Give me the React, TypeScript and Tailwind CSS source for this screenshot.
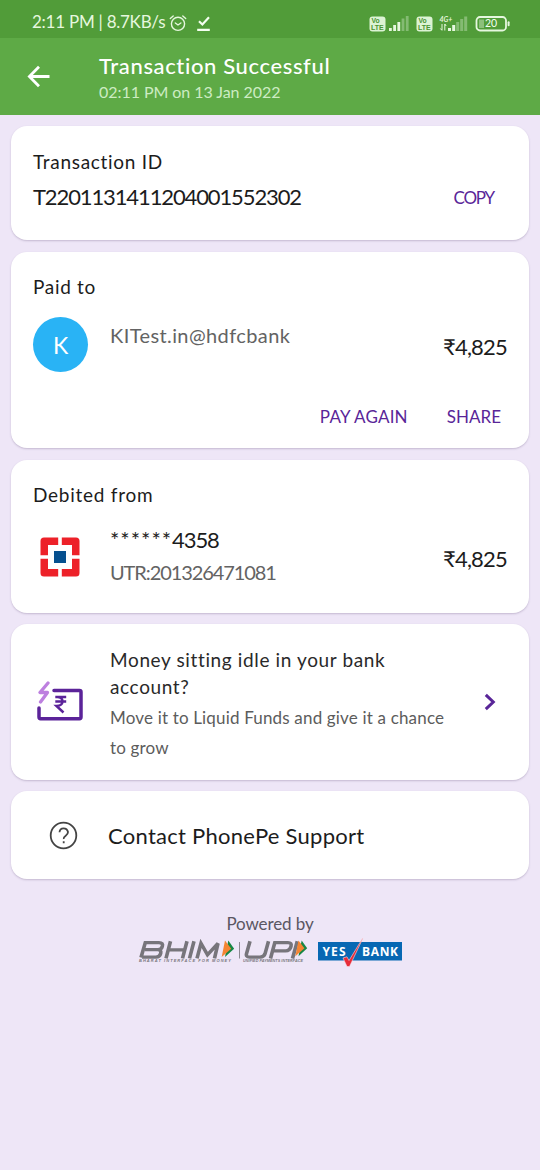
import React from 'react';

const VolteBadge: React.FC = () => (
  <svg width="17" height="16" viewBox="0 0 17 16">
    <rect x="0.5" y="0.5" width="16" height="15" rx="3" fill="#dcf3d4" />
    <text x="2.5" y="7.3" fontSize="6.8" fontWeight="700" fill="#4a9432" fontFamily="Liberation Sans, sans-serif">Vo</text>
    <text x="2" y="14" fontSize="7" fontWeight="700" fill="#4a9432" fontFamily="Liberation Sans, sans-serif">LTE</text>
  </svg>
);

const SignalBars: React.FC<{ active: number }> = ({ active }) => (
  <svg width="21" height="16" viewBox="0 0 21 16">
    {[3, 6, 9, 12.5, 15].map((h, i) => (
      <rect key={h} x={i * 4.2} y={15 - h} width="2.8" height={h} fill="#e6f7df" opacity={i < active ? 1 : 0.35} />
    ))}
  </svg>
);

const StatusBar: React.FC = () => (
  <div className="flex h-[38px] items-center justify-between bg-[#519c39] pl-8 pr-[30px] text-[#e6f7df]">
    <div className="flex h-full items-center">
      <span className="mt-[5px] w-[137px] text-[17px] leading-5 tracking-[-0.25px]">2:11 PM | 8.7KB/s</span>
      <svg className="mt-2" width="18" height="18" viewBox="0 0 18 18" fill="none" stroke="currentColor" strokeWidth="1.4" strokeLinecap="round">
        <circle cx="9" cy="9.8" r="6.6" />
        <path d="M1.3 4.6 4.2 2M16.7 4.6 13.8 2M6.3 9l2.7 2 2.9-2" />
      </svg>
      <svg className="ml-2 mt-[7px]" width="17" height="18" viewBox="0 0 17 18" fill="none" stroke="#f4fff0" strokeWidth="2.2">
        <path d="M4 7.2l3.4 3.3L14 3.3M2.2 15.8h12.6" />
      </svg>
    </div>
    <div className="mt-[10px] flex items-center">
      <VolteBadge />
      <span className="ml-[3px]"><SignalBars active={3} /></span>
      <span className="ml-[6px]"><VolteBadge /></span>
      <svg className="ml-[6px]" width="29" height="18" viewBox="0 0 29 18">
        <text x="0.5" y="6.5" fontSize="7" fontWeight="700" fontStyle="italic" fill="#e6f7df" fontFamily="Lato, sans-serif">4G+</text>
        <path d="M3 9v6M1.4 13.5 3 15.5M5.8 15.5V9M5.8 9l1.4 2" stroke="#e6f7df" strokeWidth="1" fill="none" />
        <rect x="9" y="13" width="3" height="3" fill="#e6f7df" />
        <rect x="13.2" y="10" width="3" height="6" fill="#e6f7df" />
        <g fill="#e6f7df" opacity="0.35">
          <rect x="17.2" y="7" width="3" height="9" />
          <rect x="21.2" y="4" width="3" height="12" />
          <rect x="25.2" y="1.5" width="3" height="14.5" />
        </g>
      </svg>
      <svg className="ml-[7px]" width="35" height="16" viewBox="0 0 35 16">
        <rect x="1.5" y="1" width="29.5" height="13.5" rx="3.5" fill="none" stroke="#e6f7df" strokeWidth="1.8" />
        <rect x="4" y="3.5" width="5" height="8.5" fill="#e6f7df" opacity="0.4" />
        <rect x="32.6" y="5.3" width="2" height="5" rx="1" fill="#e6f7df" />
        <text x="10" y="11" fontSize="10.5" fill="#f4fff0" fontFamily="Lato, sans-serif">20</text>
      </svg>
    </div>
  </div>
);

const Header: React.FC = () => (
  <header className="flex h-[77px] bg-[#5eaa46] text-white">
    <svg className="ml-[27px] mt-[27px]" width="24" height="23" viewBox="0 0 24 23" fill="none" stroke="white" strokeWidth="2.8">
      <path d="M22.5 11.5H3M12 1.8 2.4 11.5 12 21.2" />
    </svg>
    <div className="ml-12 mt-[14px] flex flex-col whitespace-nowrap">
      <h1 className="text-[22px] font-medium leading-7 tracking-[0.63px]">Transaction Successful</h1>
      <p className="mt-px text-base leading-[22px] tracking-[-0.05px] text-[#cdecc3]">02:11 PM on 13 Jan 2022</p>
    </div>
  </header>
);

const HdfcLogo: React.FC = () => (
  <svg width="40" height="40" viewBox="0 0 40 40">
    <path d="M4 0.5H36A3.5 3.5 0 0 1 39.5 4V36A3.5 3.5 0 0 1 36 39.5H4A3.5 3.5 0 0 1 .5 36V4A3.5 3.5 0 0 1 4 .5ZM8 8V32H32V8Z" fill="#ed2129" fillRule="evenodd" />
    <path d="M20 0V40M0 20H40" stroke="white" strokeWidth="3.6" />
    <rect x="14" y="14" width="12" height="12" fill="#06508f" />
  </svg>
);

const MoneyIcon: React.FC = () => (
  <svg width="48" height="42" viewBox="0 0 48 42" fill="none">
    <path d="M18 9.5H43.5Q45 9.5 45 11V36Q45 37.7 43.5 37.7H4.5Q3 37.7 3 36V27" stroke="#5b2399" strokeWidth="3.5" strokeLinecap="round" />
    <path d="M12 2 4 11.5H11.5L4.5 21" stroke="#bd80df" strokeWidth="3.3" strokeLinecap="round" strokeLinejoin="round" />
    <path d="M19.3 16H30.2M19.3 20.5H30.2M20.5 16C28.5 15.3 28.5 25 20.5 25L27.5 31.5" stroke="#5b2399" strokeWidth="2.5" />
  </svg>
);

const UpiArrow: React.FC = () => (
  <>
    <path d="M4 0 11 10 0 20Z" fill="#178745" />
    <path d="M0 0 7.5 10-4 20Z" fill="#f58532" />
  </>
);

const PoweredBy: React.FC = () => (
  <footer className="mt-[34px] flex flex-col items-center">
    <p className="text-[17px] leading-[22px] tracking-[-0.1px] text-[#5a5662]">Powered by</p>
    <svg className="mt-[3px]" width="264" height="30" viewBox="0 0 264 30">
      <g fill="none" stroke="#77757b" strokeWidth="3.6" transform="translate(0 1.4) scale(1 .93)">
        <path d="M3 19.5 7.3 3.5H21Q25.5 3.5 24.3 7.5Q23.5 11 20 11H7M20 11Q23.5 11.5 22.7 15Q21.8 19 18 19H4" />
        <path d="M28 20.5 32.5 2M44.5 20.5 49 2M31 11.2H46" />
        <path d="M51.5 20.5 56 2M59 20.5 63 4.2 69.5 16.5 80 4.2 76.5 20.5" />
        <path d="M112 2 108.6 15Q107.5 19 111.5 19H122Q126 19 127 15.5L130.5 2" />
        <path d="M132.5 20.5 136.8 3.5H150Q154 3.5 153 7.5Q152 12.3 147.5 12.3H136M154.5 20.5 159.3 2" />
      </g>
      <g transform="translate(87 2.4) scale(.83)"><UpiArrow /></g>
      <g transform="translate(160.5 2.4) scale(.79)"><UpiArrow /></g>
      <path d="M101.5 4V20.5" stroke="#8e8a93" />
      <g fill="#77757b" fontFamily="Liberation Sans, sans-serif" fontWeight="700" fontStyle="italic">
        <text x="1" y="24.4" fontSize="4" textLength="92">BHARAT INTERFACE FOR MONEY</text>
        <text x="105" y="24.4" fontSize="3.7" textLength="60">UNIFIED PAYMENTS INTERFACE</text>
      </g>
      <rect x="180" y="4" width="84" height="18.5" fill="#0768b3" />
      <g fill="white" fontFamily="Open Sans, sans-serif" fontWeight="700" fontSize="12">
        <text x="184.5" y="17.6" textLength="23">YES</text>
        <text x="224" y="17.6" textLength="36">BANK</text>
      </g>
      <path d="M205 20 209 18.8 211 22.5 226-2 211.5 28.5H209Z" fill="#e72c38" stroke="#f7dce4" strokeWidth="0.6" />
    </svg>
  </footer>
);

const card = 'rounded-2xl bg-white shadow-[0_1px_2px_rgba(70,50,100,0.25)] whitespace-nowrap';

const App: React.FC = () => {
  return (
    <div className="h-[1170px] w-[540px] overflow-hidden bg-[#eee6f7] font-['Lato',sans-serif] text-[#1c1c1c]">
      <StatusBar />
      <Header />

      <main className="flex flex-col gap-3 px-[11px] pt-[11px]">
        <section className={`${card} flex h-[114px] justify-between pl-[22px] pr-[35px]`}>
          <div className="pt-[23px]">
            <h2 className="text-[19px] leading-[26px] tracking-[0.7px]">Transaction ID</h2>
            <p className="mt-[7px] text-[22px] leading-[30px] tracking-[-1.12px]">T2201131411204001552302</p>
          </div>
          <button className="mt-[60px] h-6 text-[17px] leading-6 tracking-[-1.2px] text-[#592598]">COPY</button>
        </section>

        <section className={`${card} h-[196px] px-[22px] pt-[22px]`}>
          <h2 className="text-[19px] leading-[26px] tracking-[0.7px]">Paid to</h2>
          <div className="mt-[17px] flex">
            <div className="flex size-[55px] items-center justify-center rounded-full bg-[#29b3f5] pt-0.5 text-[23px] text-white">K</div>
            <p className="ml-[22px] mt-1 text-xl leading-[28px] tracking-[0.4px] text-[#636363]">KITest.in@hdfcbank</p>
            <p className="ml-auto mt-[15px] text-[22px] leading-[30px] tracking-[-0.8px]">₹4,825</p>
          </div>
          <div className="mt-[33px] flex justify-end gap-[39px] pr-1.5 text-[17px] leading-6 text-[#592598]">
            <button className="tracking-[0.2px]">PAY AGAIN</button>
            <button>SHARE</button>
          </div>
        </section>

        <section className={`${card} h-[153px] px-[22px] pt-[22px]`}>
          <h2 className="text-[19px] leading-[26px] tracking-[0.75px]">Debited from</h2>
          <div className="mt-[17px] flex">
            <div className="ml-[7px] mt-[12px]"><HdfcLogo /></div>
            <div className="ml-[30px]">
              <p className="text-[22px] leading-[30px] tracking-[-1.1px]"><span className="tracking-[1px]">******</span>4358</p>
              <p className="mt-[3px] text-xl leading-[28px] tracking-[-1.1px] text-[#636363]">UTR:201326471081</p>
            </div>
            <p className="ml-auto mt-[19px] text-[22px] leading-[30px] tracking-[-0.8px]">₹4,825</p>
          </div>
        </section>

        <section className={`${card} -mt-px flex h-[156px] pl-[25px] pr-[33px]`}>
          <div className="mt-[57px]"><MoneyIcon /></div>
          <div className="ml-[26px] pt-[22px]">
            <h2 className="text-[19px] leading-[27px] tracking-[0.63px] text-[#292929]">Money sitting idle in your bank<br />account?</h2>
            <p className="mt-[3px] text-[17px] leading-[30px] tracking-[0.17px] text-[#5c5c5c]">Move it to Liquid Funds and give it a chance<br />to grow</p>
          </div>
          <svg className="ml-auto mt-[69px]" width="12" height="18" viewBox="0 0 12 18" fill="none" stroke="#592598" strokeWidth="3">
            <path d="M1.8 1.8 9.3 9 1.8 16.2" />
          </svg>
        </section>

        <section className={`${card} -mt-px flex h-[88px] items-center pl-[38px] pt-px`}>
          <svg width="30" height="30" viewBox="0 0 30 30" fill="none" stroke="#444" strokeWidth="1.8">
            <circle cx="14.5" cy="14.5" r="12.8" />
            <path d="M10.5 11.3Q10.8 7.3 14.5 7.3T19 11Q19 13.2 16.7 14.7T14.7 18M14.7 20.3V22.3" />
          </svg>
          <h2 className="ml-[29px] text-[22px] leading-[30px] tracking-[0.27px]">Contact PhonePe Support</h2>
        </section>
      </main>

      <PoweredBy />
    </div>
  );
};

export default App;
